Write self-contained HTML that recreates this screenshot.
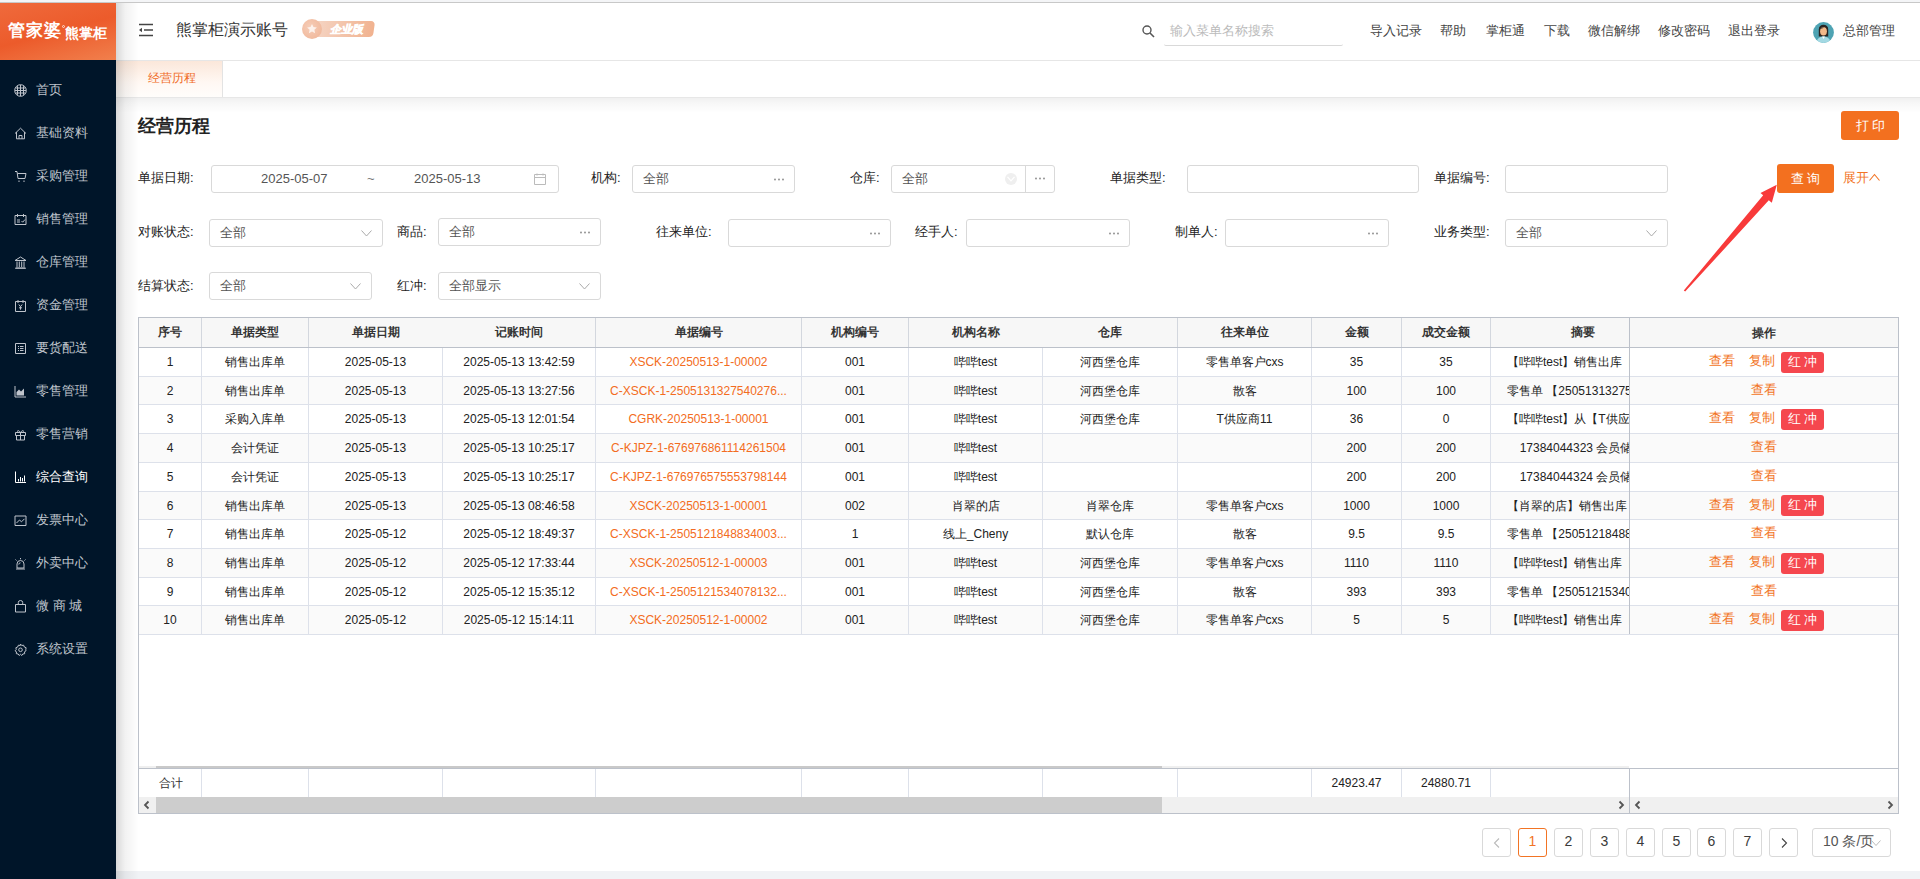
<!DOCTYPE html><html><head><meta charset="utf-8"><style>
*{box-sizing:border-box;margin:0;padding:0}
html,body{width:1920px;height:879px;overflow:hidden;background:#fff;font-family:"Liberation Sans",sans-serif;color:#333}
.a{position:absolute;white-space:nowrap}
#topstrip{left:0;top:0;width:1920px;height:3px;background:#f4f5f7;border-bottom:1px solid #c8c8c8}
#side{left:0;top:3px;width:116px;height:876px;background:#001529}
#logo{left:0;top:3px;width:116px;height:57px;background:linear-gradient(165deg,#ef6a3c 0%,#ec5b2b 50%,#f1804d 100%);overflow:hidden}
.mi{font-size:13px;color:#bfc4cc;line-height:16px}
.mi.on{color:#fff}
.ic{width:13px;height:13px}
#header{left:116px;top:3px;width:1804px;height:58px;background:#fff;border-bottom:1px solid #e6e6e6}
#tabs{left:116px;top:61px;width:1804px;height:36px;background:#fff}
#tabshadow{left:116px;top:97px;width:1804px;height:16px;background:linear-gradient(180deg,rgba(0,0,0,.13),rgba(0,0,0,.06) 1px,rgba(0,0,0,.03) 6px,rgba(0,0,0,0))}
#sideShadow{z-index:5;left:116px;top:3px;width:23px;height:876px;background:linear-gradient(90deg,rgba(0,0,0,.15),rgba(0,0,0,.05) 40%,rgba(0,0,0,0))}
#bottomstrip{left:116px;top:871px;width:1804px;height:8px;background:#f0f2f5}
.hl{font-size:13px;color:#444;line-height:16px;top:23px}
.lbl{font-size:13px;color:#222;line-height:16px}
.inp{border:1px solid #d9d9d9;border-radius:3px;background:#fff;height:28px;font-size:13px;color:#555}
.inp .v{position:absolute;left:10px;top:5px;line-height:16px}
.dots{position:absolute;right:8px;top:4px;font-size:12px;color:#666;line-height:12px;letter-spacing:-0.5px}
.chev{position:absolute;width:11px;height:7px}
.btn{background:#f3701f;color:#fff;border-radius:3px;font-size:13px;text-align:center}
.tb{position:absolute;left:138px;top:317px;width:1761px;height:497px;border:1px solid #bcc1ca;background:#fff;overflow:hidden}
.thx{position:absolute;top:0;height:30px;background:#f7f7f7;border-bottom:1px solid #bcc1ca;font-size:12px;font-weight:bold;color:#333;text-align:center;line-height:30px}
.td{position:absolute;height:29px;font-size:12px;color:#222;text-align:center;line-height:29px;overflow:hidden}
.vl{position:absolute;width:1px;background:#dde1ea}
.hr{position:absolute;height:1px;background:#dde1ea}
.lnk{color:#f36c21}
.pg{position:absolute;top:828px;width:29px;height:29px;border:1px solid #d9d9d9;border-radius:3px;font-size:14px;color:#3a3a3a;text-align:center;line-height:25px}
</style></head><body>
<div id="topstrip" class="a"></div>
<div id="side" class="a"></div>
<div id="logo" class="a"><div class="a" style="left:8px;top:18px;color:#fff;font-weight:bold;font-size:17px;line-height:20px;letter-spacing:1px">管家婆</div><div class="a" style="left:62px;top:22px;width:3px;height:3px;border:1px solid #fff;border-radius:50%;opacity:.7"></div><div class="a" style="left:65px;top:21px;color:#fff;font-weight:bold;font-size:14px;line-height:18px;letter-spacing:0px">熊掌柜</div></div>
<svg class="a ic" style="left:14px;top:84px" viewBox="0 0 13 13" fill="none" stroke="#bfc4cc" stroke-width="1"><circle cx="6.5" cy="6.5" r="5.8"/><path d="M1 6.5h11M6.5 1v11M3.5 2.2v8.6M9.5 2.2v8.6M1.5 4h10M1.5 9h10"/></svg>
<div class="a mi" style="left:36px;top:82px">首页</div>
<svg class="a ic" style="left:14px;top:127px" viewBox="0 0 13 13" fill="none" stroke="#bfc4cc" stroke-width="1"><path d="M1 6.5L6.5 1.2 12 6.5M2.5 5v6.8h8V5M5 11.8V8.5h3v3.3"/></svg>
<div class="a mi" style="left:36px;top:125px">基础资料</div>
<svg class="a ic" style="left:14px;top:170px" viewBox="0 0 13 13" fill="none" stroke="#bfc4cc" stroke-width="1"><path d="M1 1.5h2l1 7h7l1-5H3.5M5 10.5v1.5M10 10.5v1.5"/></svg>
<div class="a mi" style="left:36px;top:168px">采购管理</div>
<svg class="a ic" style="left:14px;top:213px" viewBox="0 0 13 13" fill="none" stroke="#bfc4cc" stroke-width="1"><path d="M1 2.5h11v9H1zM3.5 1v3M9.5 1v3M3 7h3M3 9h3M7.5 8l1.2 1.2L11 6.5"/></svg>
<div class="a mi" style="left:36px;top:211px">销售管理</div>
<svg class="a ic" style="left:14px;top:256px" viewBox="0 0 13 13" fill="none" stroke="#bfc4cc" stroke-width="1"><path d="M1 4.5L6.5 1 12 4.5zM2 12h9M3 5.5v5.5M5.3 5.5v5.5M7.7 5.5v5.5M10 5.5v5.5M1 12.2h11"/></svg>
<div class="a mi" style="left:36px;top:254px">仓库管理</div>
<svg class="a ic" style="left:14px;top:299px" viewBox="0 0 13 13" fill="none" stroke="#bfc4cc" stroke-width="1"><path d="M1.5 2.5h10v10h-10zM4 1v3M9 1v3M4.8 5.5l1.7 2.2 1.7-2.2M6.5 7.7v3M5 8.8h3"/></svg>
<div class="a mi" style="left:36px;top:297px">资金管理</div>
<svg class="a ic" style="left:14px;top:342px" viewBox="0 0 13 13" fill="none" stroke="#bfc4cc" stroke-width="1"><path d="M1.5 1.5h10v10h-10zM4 4.5h1M6 4.5h3.5M4 6.5h1M6 6.5h3.5M4 8.5h1M6 8.5h3.5"/></svg>
<div class="a mi" style="left:36px;top:340px">要货配送</div>
<svg class="a ic" style="left:14px;top:385px" viewBox="0 0 13 13" fill="none" stroke="#bfc4cc" stroke-width="1"><path d="M1 1v11h11"/><path d="M2.5 10.5V7l2.5-2.5 2 2 3-3v7z" fill="#bfc4cc" stroke="none"/></svg>
<div class="a mi" style="left:36px;top:383px">零售管理</div>
<svg class="a ic" style="left:14px;top:428px" viewBox="0 0 13 13" fill="none" stroke="#bfc4cc" stroke-width="1"><path d="M1.5 4.5h10v3h-10zM2.5 7.5h8v4.5h-8zM6.5 4.5v7.5M6.5 4.5C4 1 2.5 3 4.5 4.5M6.5 4.5C9 1 10.5 3 8.5 4.5"/></svg>
<div class="a mi" style="left:36px;top:426px">零售营销</div>
<svg class="a ic" style="left:14px;top:471px" viewBox="0 0 13 13" fill="none" stroke="#fff" stroke-width="1"><path d="M1.5 0.5v11h10.5M4.5 10.5V8M6.5 10.5V6M8.5 10.5V7M10.5 10.5V4.5"/></svg>
<div class="a mi on" style="left:36px;top:469px">综合查询</div>
<svg class="a ic" style="left:14px;top:514px" viewBox="0 0 13 13" fill="none" stroke="#bfc4cc" stroke-width="1"><path d="M1 2h11v9.5H1zM2.5 9l3-3 2 1.8 3-3"/></svg>
<div class="a mi" style="left:36px;top:512px">发票中心</div>
<svg class="a ic" style="left:14px;top:557px" viewBox="0 0 13 13" fill="none" stroke="#bfc4cc" stroke-width="1"><path d="M3 11V7a3.5 3.5 0 0 1 7 0v4zM2 12h9M6.5 1v1.3M1.5 2.5l1 1M11.5 2.5l-1 1M4.8 7.5a1.7 1.7 0 0 1 1.7-1.7"/></svg>
<div class="a mi" style="left:36px;top:555px">外卖中心</div>
<svg class="a ic" style="left:14px;top:600px" viewBox="0 0 13 13" fill="none" stroke="#bfc4cc" stroke-width="1"><path d="M1.5 4.5h10v7.5h-10zM4.3 4.5V2.5a2.2 2 0 0 1 4.4 0v2"/></svg>
<div class="a mi" style="left:36px;top:598px">微 商 城</div>
<svg class="a ic" style="left:14px;top:643px" viewBox="0 0 13 13" fill="none" stroke="#bfc4cc" stroke-width="1"><path d="M6.5 1l1.2 1.5 1.9-.3.7 1.8 1.8.7-.3 1.9L12 7.8l-1.5 1 .2 1.9-1.9.3-1 1.5-1.3-1.2-1.3 1.2-1-1.5-1.9-.3.2-1.9L1 7.8l1.2-1.2-.3-1.9 1.8-.7.7-1.8 1.9.3z"/><circle cx="6.5" cy="6.8" r="1.8"/></svg>
<div class="a mi" style="left:36px;top:641px">系统设置</div>
<div id="header" class="a"></div>
<div id="tabs" class="a"></div>
<div id="tabshadow" class="a"></div>
<div id="sideShadow" class="a"></div>
<div id="bottomstrip" class="a"></div>
<svg class="a" style="left:139px;top:23px" width="15" height="14" viewBox="0 0 15 14"><path d="M0 1.5h14M5 7h9M0 12.5h14" stroke="#444" stroke-width="1.6"/><path d="M0 7l3-2.3v4.6z" fill="#444"/></svg>
<div class="a" style="left:176px;top:20px;font-size:16px;line-height:19px;color:#333">熊掌柜演示账号</div>
<div class="a" style="left:312px;top:21px;width:62px;height:16px;border-radius:2px 4px 4px 2px;background:linear-gradient(90deg,#f5d6c6,#f1b28f);transform:skewX(-8deg)"></div>
<div class="a" style="left:302px;top:19px;width:20px;height:20px;border-radius:50%;background:radial-gradient(circle at 40% 40%,#f6cdb8,#efb394)"></div>
<svg class="a" style="left:306px;top:23px" width="12" height="12" viewBox="0 0 12 12"><path d="M6 1l1.5 3.1 3.4.4-2.5 2.3.7 3.4L6 8.5 2.9 10.2l.7-3.4L1.1 4.5l3.4-.4z" fill="#fff" opacity=".75"/></svg>
<div class="a" style="left:330px;top:22px;font-size:11px;line-height:14px;color:#fff;font-weight:bold;font-style:italic;-webkit-text-stroke:0.5px #fff">企业版</div>
<svg class="a" style="left:1142px;top:25px" width="13" height="13" viewBox="0 0 13 13"><circle cx="5" cy="5" r="4" fill="none" stroke="#555" stroke-width="1.4"/><path d="M8 8l4 4" stroke="#555" stroke-width="1.6"/></svg>
<div class="a" style="left:1164px;top:44px;width:179px;height:2px;border-bottom:1px solid #d9d9d9;border-radius:0 0 4px 4px"></div>
<div class="a" style="left:1170px;top:23px;font-size:13px;line-height:16px;color:#bbb">输入菜单名称搜索</div>
<div class="a hl" style="left:1370px">导入记录</div>
<div class="a hl" style="left:1440px">帮助</div>
<div class="a hl" style="left:1486px">掌柜通</div>
<div class="a hl" style="left:1544px">下载</div>
<div class="a hl" style="left:1588px">微信解绑</div>
<div class="a hl" style="left:1658px">修改密码</div>
<div class="a hl" style="left:1728px">退出登录</div>
<svg class="a" style="left:1813px;top:22px" width="21" height="21" viewBox="0 0 21 21"><defs><clipPath id="cc"><circle cx="10.5" cy="10.5" r="10.4"/></clipPath></defs><circle cx="10.5" cy="10.5" r="10.4" fill="#4ea3b3"/><g clip-path="url(#cc)"><path d="M5.8 14.5V7.5C5.8 4.3 7.8 2.8 10.5 2.8S15.2 4.3 15.2 7.5V14.5z" fill="#2b2522"/><ellipse cx="10.5" cy="9.3" rx="3.4" ry="4.3" fill="#f2b888"/><path d="M7 6.5C8.5 6.8 11 6 12.5 4.8L14.2 7.2V5.5H6.8z" fill="#2b2522"/><path d="M3.5 21.5C3.5 16.5 6.5 14.8 10.5 14.5C14.5 14.8 17.5 16.5 17.5 21.5z" fill="#a3d9e3"/><path d="M9 14.5L10.5 17L12 14.5z" fill="#fff"/></g></svg>
<div class="a hl" style="left:1843px">总部管理</div>
<div class="a" style="left:116px;top:61px;width:107px;height:36px;background:linear-gradient(180deg,#fbe7da,#fff8f3 60%,#fffdfb);border-right:1px solid #e3e3e3"></div>
<div class="a" style="left:148px;top:70px;font-size:11.5px;line-height:16px;color:#f06a24">经营历程</div>
<div class="a" style="left:138px;top:115px;font-size:18px;line-height:22px;font-weight:bold;color:#222">经营历程</div>
<div class="a btn" style="left:1841px;top:111px;width:58px;height:29px;line-height:29px;letter-spacing:3px;padding-left:3px">打印</div>
<div class="a lbl" style="left:138px;top:170px">单据日期:</div>
<div class="a inp" style="left:211px;top:165px;width:348px"><div class="v" style="left:49px">2025-05-07</div><div class="v" style="left:155px;color:#777">~</div><div class="v" style="left:202px">2025-05-13</div><svg class="a" style="left:322px;top:7px" width="12" height="12" viewBox="0 0 12 12"><path d="M.5 1.5h11v10H.5zM.5 4.5h11M3 .5v2M9 .5v2" fill="none" stroke="#bbb" stroke-width="1"/></svg></div>
<div class="a lbl" style="left:591px;top:170px">机构:</div>
<div class="a inp" style="left:632px;top:165px;width:163px"><div class="v">全部</div><svg class="a" style="right:10px;top:12px" width="10" height="3" viewBox="0 0 10 3"><circle cx="1" cy="1.5" r="0.9" fill="#888"/><circle cx="5" cy="1.5" r="0.9" fill="#888"/><circle cx="9" cy="1.5" r="0.9" fill="#888"/></svg></div>
<div class="a lbl" style="left:850px;top:170px">仓库:</div>
<div class="a inp" style="left:891px;top:165px;width:164px"><div class="v">全部</div><div class="a" style="left:113px;top:7px;width:12px;height:12px;border-radius:50%;background:#efefef"></div><svg class="a" style="left:115px;top:10px" width="8" height="6" viewBox="0 0 8 6"><path d="M.5 .8l3.5 4 3.5-4" fill="none" stroke="#fff" stroke-width="1.2"/></svg><div class="a" style="left:133px;top:-1px;width:1px;height:28px;background:#d9d9d9"></div><svg class="a" style="right:9px;top:11px" width="10" height="3" viewBox="0 0 10 3"><circle cx="1" cy="1.5" r="0.9" fill="#888"/><circle cx="5" cy="1.5" r="0.9" fill="#888"/><circle cx="9" cy="1.5" r="0.9" fill="#888"/></svg></div>
<div class="a lbl" style="left:1110px;top:170px">单据类型:</div>
<div class="a inp" style="left:1187px;top:165px;width:232px"></div>
<div class="a lbl" style="left:1434px;top:170px">单据编号:</div>
<div class="a inp" style="left:1505px;top:165px;width:163px"></div>
<div class="a btn" style="left:1777px;top:164px;width:57px;height:29px;line-height:29px;letter-spacing:3px;padding-left:3px">查询</div>
<div class="a" style="left:1843px;top:170px;font-size:13px;line-height:16px;color:#f27424">展开<svg width="11" height="8" viewBox="0 0 11 8" style="vertical-align:1px"><path d="M.5 7.5L5.5 1.5l5 6" fill="none" stroke="#f27424" stroke-width="1.1"/></svg></div>
<div class="a lbl" style="left:138px;top:224px">对账状态:</div>
<div class="a inp" style="left:209px;top:219px;width:174px"><div class="v">全部</div><svg class="chev" style="right:10px;top:10px" viewBox="0 0 11 7"><path d="M.5 .5l5 5.5 5-5.5" fill="none" stroke="#aaa" stroke-width="1"/></svg></div>
<div class="a lbl" style="left:397px;top:224px">商品:</div>
<div class="a inp" style="left:438px;top:218px;width:163px"><div class="v">全部</div><svg class="a" style="right:10px;top:12px" width="10" height="3" viewBox="0 0 10 3"><circle cx="1" cy="1.5" r="0.9" fill="#888"/><circle cx="5" cy="1.5" r="0.9" fill="#888"/><circle cx="9" cy="1.5" r="0.9" fill="#888"/></svg></div>
<div class="a lbl" style="left:656px;top:224px">往来单位:</div>
<div class="a inp" style="left:728px;top:219px;width:163px"><svg class="a" style="right:10px;top:12px" width="10" height="3" viewBox="0 0 10 3"><circle cx="1" cy="1.5" r="0.9" fill="#888"/><circle cx="5" cy="1.5" r="0.9" fill="#888"/><circle cx="9" cy="1.5" r="0.9" fill="#888"/></svg></div>
<div class="a lbl" style="left:915px;top:224px">经手人:</div>
<div class="a inp" style="left:966px;top:219px;width:164px"><svg class="a" style="right:10px;top:12px" width="10" height="3" viewBox="0 0 10 3"><circle cx="1" cy="1.5" r="0.9" fill="#888"/><circle cx="5" cy="1.5" r="0.9" fill="#888"/><circle cx="9" cy="1.5" r="0.9" fill="#888"/></svg></div>
<div class="a lbl" style="left:1175px;top:224px">制单人:</div>
<div class="a inp" style="left:1225px;top:219px;width:164px"><svg class="a" style="right:10px;top:12px" width="10" height="3" viewBox="0 0 10 3"><circle cx="1" cy="1.5" r="0.9" fill="#888"/><circle cx="5" cy="1.5" r="0.9" fill="#888"/><circle cx="9" cy="1.5" r="0.9" fill="#888"/></svg></div>
<div class="a lbl" style="left:1434px;top:224px">业务类型:</div>
<div class="a inp" style="left:1505px;top:219px;width:163px"><div class="v">全部</div><svg class="chev" style="right:10px;top:10px" viewBox="0 0 11 7"><path d="M.5 .5l5 5.5 5-5.5" fill="none" stroke="#aaa" stroke-width="1"/></svg></div>
<div class="a lbl" style="left:138px;top:278px">结算状态:</div>
<div class="a inp" style="left:209px;top:272px;width:163px"><div class="v">全部</div><svg class="chev" style="right:10px;top:10px" viewBox="0 0 11 7"><path d="M.5 .5l5 5.5 5-5.5" fill="none" stroke="#aaa" stroke-width="1"/></svg></div>
<div class="a lbl" style="left:397px;top:278px">红冲:</div>
<div class="a inp" style="left:438px;top:272px;width:163px"><div class="v">全部显示</div><svg class="chev" style="right:10px;top:10px" viewBox="0 0 11 7"><path d="M.5 .5l5 5.5 5-5.5" fill="none" stroke="#aaa" stroke-width="1"/></svg></div>
<svg class="a" style="left:0;top:0" width="1920" height="879"><path d="M1683.8 290.6 L1763.2 195.3 L1760.5 192.9 L1776.8 184.8 L1771.8 202.8 L1768.8 200.3 L1685.2 291.6 Z" fill="#f83a3a"/></svg>
<div class="tb">
<div class="a" style="left:0.00px;top:30.00px;width:1759.00px;height:28.70px;background:#fff"></div>
<div class="a" style="left:0.00px;top:58.70px;width:1759.00px;height:28.70px;background:#fafafa"></div>
<div class="a" style="left:0.00px;top:87.40px;width:1759.00px;height:28.70px;background:#fff"></div>
<div class="a" style="left:0.00px;top:116.10px;width:1759.00px;height:28.70px;background:#fafafa"></div>
<div class="a" style="left:0.00px;top:144.80px;width:1759.00px;height:28.70px;background:#fff"></div>
<div class="a" style="left:0.00px;top:173.50px;width:1759.00px;height:28.70px;background:#fafafa"></div>
<div class="a" style="left:0.00px;top:202.20px;width:1759.00px;height:28.70px;background:#fff"></div>
<div class="a" style="left:0.00px;top:230.90px;width:1759.00px;height:28.70px;background:#fafafa"></div>
<div class="a" style="left:0.00px;top:259.60px;width:1759.00px;height:28.70px;background:#fff"></div>
<div class="a" style="left:0.00px;top:288.30px;width:1759.00px;height:28.70px;background:#fafafa"></div>
<div class="a" style="left:0.00px;top:0.00px;width:1759.00px;height:29.00px;background:#f7f7f7"></div>
<div class="a" style="left:0.00px;top:29.00px;width:1759.00px;height:1.00px;background:#bcc1ca"></div>
<div class="a" style="left:0.00px;top:0.00px;width:62.00px;height:29.00px;line-height:29px;text-align:center;font-size:11.5px;font-weight:bold;color:#333">序号</div>
<div class="a" style="left:63.00px;top:0.00px;width:106.00px;height:29.00px;line-height:29px;text-align:center;font-size:11.5px;font-weight:bold;color:#333">单据类型</div>
<div class="a" style="left:170.00px;top:0.00px;width:133.00px;height:29.00px;line-height:29px;text-align:center;font-size:11.5px;font-weight:bold;color:#333">单据日期</div>
<div class="a" style="left:304.00px;top:0.00px;width:152.00px;height:29.00px;line-height:29px;text-align:center;font-size:11.5px;font-weight:bold;color:#333">记账时间</div>
<div class="a" style="left:457.00px;top:0.00px;width:205.00px;height:29.00px;line-height:29px;text-align:center;font-size:11.5px;font-weight:bold;color:#333">单据编号</div>
<div class="a" style="left:663.00px;top:0.00px;width:106.00px;height:29.00px;line-height:29px;text-align:center;font-size:11.5px;font-weight:bold;color:#333">机构编号</div>
<div class="a" style="left:770.00px;top:0.00px;width:133.00px;height:29.00px;line-height:29px;text-align:center;font-size:11.5px;font-weight:bold;color:#333">机构名称</div>
<div class="a" style="left:904.00px;top:0.00px;width:134.00px;height:29.00px;line-height:29px;text-align:center;font-size:11.5px;font-weight:bold;color:#333">仓库</div>
<div class="a" style="left:1039.00px;top:0.00px;width:133.00px;height:29.00px;line-height:29px;text-align:center;font-size:11.5px;font-weight:bold;color:#333">往来单位</div>
<div class="a" style="left:1173.00px;top:0.00px;width:89.00px;height:29.00px;line-height:29px;text-align:center;font-size:11.5px;font-weight:bold;color:#333">金额</div>
<div class="a" style="left:1263.00px;top:0.00px;width:88.00px;height:29.00px;line-height:29px;text-align:center;font-size:11.5px;font-weight:bold;color:#333">成交金额</div>
<div class="a" style="left:1352.00px;top:0.00px;width:183.00px;height:29.00px;line-height:29px;text-align:center;font-size:11.5px;font-weight:bold;color:#333">摘要</div>
<div class="a" style="left:62.00px;top:0.00px;width:1.00px;height:29.00px;background:#d3d7de"></div>
<div class="a" style="left:169.00px;top:0.00px;width:1.00px;height:29.00px;background:#d3d7de"></div>
<div class="a" style="left:456.00px;top:0.00px;width:1.00px;height:29.00px;background:#d3d7de"></div>
<div class="a" style="left:662.00px;top:0.00px;width:1.00px;height:29.00px;background:#d3d7de"></div>
<div class="a" style="left:769.00px;top:0.00px;width:1.00px;height:29.00px;background:#d3d7de"></div>
<div class="a" style="left:1038.00px;top:0.00px;width:1.00px;height:29.00px;background:#d3d7de"></div>
<div class="a" style="left:1172.00px;top:0.00px;width:1.00px;height:29.00px;background:#d3d7de"></div>
<div class="a" style="left:1262.00px;top:0.00px;width:1.00px;height:29.00px;background:#d3d7de"></div>
<div class="a" style="left:1351.00px;top:0.00px;width:1.00px;height:29.00px;background:#d3d7de"></div>
<div class="a" style="left:1490.00px;top:0.00px;width:1.00px;height:29.00px;background:#d3d7de"></div>
<div class="td" style="left:0.00px;top:30.00px;width:62.00px;height:27.70px;line-height:28px">1</div>
<div class="td" style="left:63.00px;top:30.00px;width:106.00px;height:27.70px;line-height:28px">销售出库单</div>
<div class="td" style="left:170.00px;top:30.00px;width:133.00px;height:27.70px;line-height:28px">2025-05-13</div>
<div class="td" style="left:304.00px;top:30.00px;width:152.00px;height:27.70px;line-height:28px">2025-05-13 13:42:59</div>
<div class="td" style="left:457.00px;top:30.00px;width:205.00px;height:27.70px;line-height:28px"><span class="lnk">XSCK-20250513-1-00002</span></div>
<div class="td" style="left:663.00px;top:30.00px;width:106.00px;height:27.70px;line-height:28px">001</div>
<div class="td" style="left:770.00px;top:30.00px;width:133.00px;height:27.70px;line-height:28px">哔哔test</div>
<div class="td" style="left:904.00px;top:30.00px;width:134.00px;height:27.70px;line-height:28px">河西堡仓库</div>
<div class="td" style="left:1039.00px;top:30.00px;width:133.00px;height:27.70px;line-height:28px">零售单客户cxs</div>
<div class="td" style="left:1173.00px;top:30.00px;width:89.00px;height:27.70px;line-height:28px">35</div>
<div class="td" style="left:1263.00px;top:30.00px;width:88.00px;height:27.70px;line-height:28px">35</div>
<div class="td" style="left:1368.00px;top:30.00px;width:150.00px;height:27.70px;line-height:28px;white-space:nowrap">【哔哔test】销售出库【XSCK-20250513-1-00002】</div>
<div class="td" style="left:0.00px;top:58.70px;width:62.00px;height:27.70px;line-height:28px">2</div>
<div class="td" style="left:63.00px;top:58.70px;width:106.00px;height:27.70px;line-height:28px">销售出库单</div>
<div class="td" style="left:170.00px;top:58.70px;width:133.00px;height:27.70px;line-height:28px">2025-05-13</div>
<div class="td" style="left:304.00px;top:58.70px;width:152.00px;height:27.70px;line-height:28px">2025-05-13 13:27:56</div>
<div class="td" style="left:457.00px;top:58.70px;width:205.00px;height:27.70px;line-height:28px"><span class="lnk">C-XSCK-1-2505131327540276...</span></div>
<div class="td" style="left:663.00px;top:58.70px;width:106.00px;height:27.70px;line-height:28px">001</div>
<div class="td" style="left:770.00px;top:58.70px;width:133.00px;height:27.70px;line-height:28px">哔哔test</div>
<div class="td" style="left:904.00px;top:58.70px;width:134.00px;height:27.70px;line-height:28px">河西堡仓库</div>
<div class="td" style="left:1039.00px;top:58.70px;width:133.00px;height:27.70px;line-height:28px">散客</div>
<div class="td" style="left:1173.00px;top:58.70px;width:89.00px;height:27.70px;line-height:28px">100</div>
<div class="td" style="left:1263.00px;top:58.70px;width:88.00px;height:27.70px;line-height:28px">100</div>
<div class="td" style="left:1368.00px;top:58.70px;width:150.00px;height:27.70px;line-height:28px;white-space:nowrap">零售单 【2505131327540276】</div>
<div class="td" style="left:0.00px;top:87.40px;width:62.00px;height:27.70px;line-height:28px">3</div>
<div class="td" style="left:63.00px;top:87.40px;width:106.00px;height:27.70px;line-height:28px">采购入库单</div>
<div class="td" style="left:170.00px;top:87.40px;width:133.00px;height:27.70px;line-height:28px">2025-05-13</div>
<div class="td" style="left:304.00px;top:87.40px;width:152.00px;height:27.70px;line-height:28px">2025-05-13 12:01:54</div>
<div class="td" style="left:457.00px;top:87.40px;width:205.00px;height:27.70px;line-height:28px"><span class="lnk">CGRK-20250513-1-00001</span></div>
<div class="td" style="left:663.00px;top:87.40px;width:106.00px;height:27.70px;line-height:28px">001</div>
<div class="td" style="left:770.00px;top:87.40px;width:133.00px;height:27.70px;line-height:28px">哔哔test</div>
<div class="td" style="left:904.00px;top:87.40px;width:134.00px;height:27.70px;line-height:28px">河西堡仓库</div>
<div class="td" style="left:1039.00px;top:87.40px;width:133.00px;height:27.70px;line-height:28px">T供应商11</div>
<div class="td" style="left:1173.00px;top:87.40px;width:89.00px;height:27.70px;line-height:28px">36</div>
<div class="td" style="left:1263.00px;top:87.40px;width:88.00px;height:27.70px;line-height:28px">0</div>
<div class="td" style="left:1368.00px;top:87.40px;width:150.00px;height:27.70px;line-height:28px;white-space:nowrap">【哔哔test】从【T供应商11】采购入库</div>
<div class="td" style="left:0.00px;top:116.10px;width:62.00px;height:27.70px;line-height:28px">4</div>
<div class="td" style="left:63.00px;top:116.10px;width:106.00px;height:27.70px;line-height:28px">会计凭证</div>
<div class="td" style="left:170.00px;top:116.10px;width:133.00px;height:27.70px;line-height:28px">2025-05-13</div>
<div class="td" style="left:304.00px;top:116.10px;width:152.00px;height:27.70px;line-height:28px">2025-05-13 10:25:17</div>
<div class="td" style="left:457.00px;top:116.10px;width:205.00px;height:27.70px;line-height:28px"><span class="lnk">C-KJPZ-1-676976861114261504</span></div>
<div class="td" style="left:663.00px;top:116.10px;width:106.00px;height:27.70px;line-height:28px">001</div>
<div class="td" style="left:770.00px;top:116.10px;width:133.00px;height:27.70px;line-height:28px">哔哔test</div>
<div class="td" style="left:1173.00px;top:116.10px;width:89.00px;height:27.70px;line-height:28px">200</div>
<div class="td" style="left:1263.00px;top:116.10px;width:88.00px;height:27.70px;line-height:28px">200</div>
<div class="td" style="left:1368.00px;top:116.10px;width:150.00px;height:27.70px;line-height:28px;white-space:nowrap">17384044323 会员储值</div>
<div class="td" style="left:0.00px;top:144.80px;width:62.00px;height:27.70px;line-height:28px">5</div>
<div class="td" style="left:63.00px;top:144.80px;width:106.00px;height:27.70px;line-height:28px">会计凭证</div>
<div class="td" style="left:170.00px;top:144.80px;width:133.00px;height:27.70px;line-height:28px">2025-05-13</div>
<div class="td" style="left:304.00px;top:144.80px;width:152.00px;height:27.70px;line-height:28px">2025-05-13 10:25:17</div>
<div class="td" style="left:457.00px;top:144.80px;width:205.00px;height:27.70px;line-height:28px"><span class="lnk">C-KJPZ-1-676976575553798144</span></div>
<div class="td" style="left:663.00px;top:144.80px;width:106.00px;height:27.70px;line-height:28px">001</div>
<div class="td" style="left:770.00px;top:144.80px;width:133.00px;height:27.70px;line-height:28px">哔哔test</div>
<div class="td" style="left:1173.00px;top:144.80px;width:89.00px;height:27.70px;line-height:28px">200</div>
<div class="td" style="left:1263.00px;top:144.80px;width:88.00px;height:27.70px;line-height:28px">200</div>
<div class="td" style="left:1368.00px;top:144.80px;width:150.00px;height:27.70px;line-height:28px;white-space:nowrap">17384044324 会员储值</div>
<div class="td" style="left:0.00px;top:173.50px;width:62.00px;height:27.70px;line-height:28px">6</div>
<div class="td" style="left:63.00px;top:173.50px;width:106.00px;height:27.70px;line-height:28px">销售出库单</div>
<div class="td" style="left:170.00px;top:173.50px;width:133.00px;height:27.70px;line-height:28px">2025-05-13</div>
<div class="td" style="left:304.00px;top:173.50px;width:152.00px;height:27.70px;line-height:28px">2025-05-13 08:46:58</div>
<div class="td" style="left:457.00px;top:173.50px;width:205.00px;height:27.70px;line-height:28px"><span class="lnk">XSCK-20250513-1-00001</span></div>
<div class="td" style="left:663.00px;top:173.50px;width:106.00px;height:27.70px;line-height:28px">002</div>
<div class="td" style="left:770.00px;top:173.50px;width:133.00px;height:27.70px;line-height:28px">肖翠的店</div>
<div class="td" style="left:904.00px;top:173.50px;width:134.00px;height:27.70px;line-height:28px">肖翠仓库</div>
<div class="td" style="left:1039.00px;top:173.50px;width:133.00px;height:27.70px;line-height:28px">零售单客户cxs</div>
<div class="td" style="left:1173.00px;top:173.50px;width:89.00px;height:27.70px;line-height:28px">1000</div>
<div class="td" style="left:1263.00px;top:173.50px;width:88.00px;height:27.70px;line-height:28px">1000</div>
<div class="td" style="left:1368.00px;top:173.50px;width:150.00px;height:27.70px;line-height:28px;white-space:nowrap">【肖翠的店】销售出库【XSCK-20250513-1-00001】</div>
<div class="td" style="left:0.00px;top:202.20px;width:62.00px;height:27.70px;line-height:28px">7</div>
<div class="td" style="left:63.00px;top:202.20px;width:106.00px;height:27.70px;line-height:28px">销售出库单</div>
<div class="td" style="left:170.00px;top:202.20px;width:133.00px;height:27.70px;line-height:28px">2025-05-12</div>
<div class="td" style="left:304.00px;top:202.20px;width:152.00px;height:27.70px;line-height:28px">2025-05-12 18:49:37</div>
<div class="td" style="left:457.00px;top:202.20px;width:205.00px;height:27.70px;line-height:28px"><span class="lnk">C-XSCK-1-2505121848834003...</span></div>
<div class="td" style="left:663.00px;top:202.20px;width:106.00px;height:27.70px;line-height:28px">1</div>
<div class="td" style="left:770.00px;top:202.20px;width:133.00px;height:27.70px;line-height:28px">线上_Cheny</div>
<div class="td" style="left:904.00px;top:202.20px;width:134.00px;height:27.70px;line-height:28px">默认仓库</div>
<div class="td" style="left:1039.00px;top:202.20px;width:133.00px;height:27.70px;line-height:28px">散客</div>
<div class="td" style="left:1173.00px;top:202.20px;width:89.00px;height:27.70px;line-height:28px">9.5</div>
<div class="td" style="left:1263.00px;top:202.20px;width:88.00px;height:27.70px;line-height:28px">9.5</div>
<div class="td" style="left:1368.00px;top:202.20px;width:150.00px;height:27.70px;line-height:28px;white-space:nowrap">零售单 【2505121848834003】</div>
<div class="td" style="left:0.00px;top:230.90px;width:62.00px;height:27.70px;line-height:28px">8</div>
<div class="td" style="left:63.00px;top:230.90px;width:106.00px;height:27.70px;line-height:28px">销售出库单</div>
<div class="td" style="left:170.00px;top:230.90px;width:133.00px;height:27.70px;line-height:28px">2025-05-12</div>
<div class="td" style="left:304.00px;top:230.90px;width:152.00px;height:27.70px;line-height:28px">2025-05-12 17:33:44</div>
<div class="td" style="left:457.00px;top:230.90px;width:205.00px;height:27.70px;line-height:28px"><span class="lnk">XSCK-20250512-1-00003</span></div>
<div class="td" style="left:663.00px;top:230.90px;width:106.00px;height:27.70px;line-height:28px">001</div>
<div class="td" style="left:770.00px;top:230.90px;width:133.00px;height:27.70px;line-height:28px">哔哔test</div>
<div class="td" style="left:904.00px;top:230.90px;width:134.00px;height:27.70px;line-height:28px">河西堡仓库</div>
<div class="td" style="left:1039.00px;top:230.90px;width:133.00px;height:27.70px;line-height:28px">零售单客户cxs</div>
<div class="td" style="left:1173.00px;top:230.90px;width:89.00px;height:27.70px;line-height:28px">1110</div>
<div class="td" style="left:1263.00px;top:230.90px;width:88.00px;height:27.70px;line-height:28px">1110</div>
<div class="td" style="left:1368.00px;top:230.90px;width:150.00px;height:27.70px;line-height:28px;white-space:nowrap">【哔哔test】销售出库【XSCK-20250512-1-00003】</div>
<div class="td" style="left:0.00px;top:259.60px;width:62.00px;height:27.70px;line-height:28px">9</div>
<div class="td" style="left:63.00px;top:259.60px;width:106.00px;height:27.70px;line-height:28px">销售出库单</div>
<div class="td" style="left:170.00px;top:259.60px;width:133.00px;height:27.70px;line-height:28px">2025-05-12</div>
<div class="td" style="left:304.00px;top:259.60px;width:152.00px;height:27.70px;line-height:28px">2025-05-12 15:35:12</div>
<div class="td" style="left:457.00px;top:259.60px;width:205.00px;height:27.70px;line-height:28px"><span class="lnk">C-XSCK-1-2505121534078132...</span></div>
<div class="td" style="left:663.00px;top:259.60px;width:106.00px;height:27.70px;line-height:28px">001</div>
<div class="td" style="left:770.00px;top:259.60px;width:133.00px;height:27.70px;line-height:28px">哔哔test</div>
<div class="td" style="left:904.00px;top:259.60px;width:134.00px;height:27.70px;line-height:28px">河西堡仓库</div>
<div class="td" style="left:1039.00px;top:259.60px;width:133.00px;height:27.70px;line-height:28px">散客</div>
<div class="td" style="left:1173.00px;top:259.60px;width:89.00px;height:27.70px;line-height:28px">393</div>
<div class="td" style="left:1263.00px;top:259.60px;width:88.00px;height:27.70px;line-height:28px">393</div>
<div class="td" style="left:1368.00px;top:259.60px;width:150.00px;height:27.70px;line-height:28px;white-space:nowrap">零售单 【2505121534078132】</div>
<div class="td" style="left:0.00px;top:288.30px;width:62.00px;height:27.70px;line-height:28px">10</div>
<div class="td" style="left:63.00px;top:288.30px;width:106.00px;height:27.70px;line-height:28px">销售出库单</div>
<div class="td" style="left:170.00px;top:288.30px;width:133.00px;height:27.70px;line-height:28px">2025-05-12</div>
<div class="td" style="left:304.00px;top:288.30px;width:152.00px;height:27.70px;line-height:28px">2025-05-12 15:14:11</div>
<div class="td" style="left:457.00px;top:288.30px;width:205.00px;height:27.70px;line-height:28px"><span class="lnk">XSCK-20250512-1-00002</span></div>
<div class="td" style="left:663.00px;top:288.30px;width:106.00px;height:27.70px;line-height:28px">001</div>
<div class="td" style="left:770.00px;top:288.30px;width:133.00px;height:27.70px;line-height:28px">哔哔test</div>
<div class="td" style="left:904.00px;top:288.30px;width:134.00px;height:27.70px;line-height:28px">河西堡仓库</div>
<div class="td" style="left:1039.00px;top:288.30px;width:133.00px;height:27.70px;line-height:28px">零售单客户cxs</div>
<div class="td" style="left:1173.00px;top:288.30px;width:89.00px;height:27.70px;line-height:28px">5</div>
<div class="td" style="left:1263.00px;top:288.30px;width:88.00px;height:27.70px;line-height:28px">5</div>
<div class="td" style="left:1368.00px;top:288.30px;width:150.00px;height:27.70px;line-height:28px;white-space:nowrap">【哔哔test】销售出库【XSCK-20250512-1-00002】</div>
<div class="a" style="left:0.00px;top:57.70px;width:1759.00px;height:1.00px;background:#dde1ea"></div>
<div class="a" style="left:0.00px;top:86.40px;width:1759.00px;height:1.00px;background:#dde1ea"></div>
<div class="a" style="left:0.00px;top:115.10px;width:1759.00px;height:1.00px;background:#dde1ea"></div>
<div class="a" style="left:0.00px;top:143.80px;width:1759.00px;height:1.00px;background:#dde1ea"></div>
<div class="a" style="left:0.00px;top:172.50px;width:1759.00px;height:1.00px;background:#dde1ea"></div>
<div class="a" style="left:0.00px;top:201.20px;width:1759.00px;height:1.00px;background:#dde1ea"></div>
<div class="a" style="left:0.00px;top:229.90px;width:1759.00px;height:1.00px;background:#dde1ea"></div>
<div class="a" style="left:0.00px;top:258.60px;width:1759.00px;height:1.00px;background:#dde1ea"></div>
<div class="a" style="left:0.00px;top:287.30px;width:1759.00px;height:1.00px;background:#dde1ea"></div>
<div class="a" style="left:0.00px;top:316.00px;width:1759.00px;height:1.00px;background:#dde1ea"></div>
<div class="a" style="left:62.00px;top:30.00px;width:1.00px;height:286.00px;background:#dde1ea"></div>
<div class="a" style="left:169.00px;top:30.00px;width:1.00px;height:286.00px;background:#dde1ea"></div>
<div class="a" style="left:303.00px;top:30.00px;width:1.00px;height:286.00px;background:#dde1ea"></div>
<div class="a" style="left:456.00px;top:30.00px;width:1.00px;height:286.00px;background:#dde1ea"></div>
<div class="a" style="left:662.00px;top:30.00px;width:1.00px;height:286.00px;background:#dde1ea"></div>
<div class="a" style="left:769.00px;top:30.00px;width:1.00px;height:286.00px;background:#dde1ea"></div>
<div class="a" style="left:903.00px;top:30.00px;width:1.00px;height:286.00px;background:#dde1ea"></div>
<div class="a" style="left:1038.00px;top:30.00px;width:1.00px;height:286.00px;background:#dde1ea"></div>
<div class="a" style="left:1172.00px;top:30.00px;width:1.00px;height:286.00px;background:#dde1ea"></div>
<div class="a" style="left:1262.00px;top:30.00px;width:1.00px;height:286.00px;background:#dde1ea"></div>
<div class="a" style="left:1351.00px;top:30.00px;width:1.00px;height:286.00px;background:#dde1ea"></div>
<div class="a" style="left:1491.00px;top:0.00px;width:268.00px;height:29.00px;background:#f7f7f7;line-height:31px;text-align:center;font-size:11.5px;font-weight:bold;color:#333">操作</div>
<div class="a" style="left:1490.00px;top:0.00px;width:1.00px;height:316.00px;background:#bcc1ca"></div>
<div class="a" style="left:1491.00px;top:30.00px;width:268.00px;height:27.70px;background:#fff"></div>
<div class="a" style="left:1570.00px;top:35.00px;width:28.00px;height:16.00px;font-size:13px;line-height:16px;color:#f27424">查看</div>
<div class="a" style="left:1610.00px;top:35.00px;width:28.00px;height:16.00px;font-size:13px;line-height:16px;color:#f27424">复制</div>
<div class="a" style="left:1642.00px;top:33.70px;width:43.00px;height:21.00px;border-radius:3px;background:#f5474e;color:#fff;font-size:13px;line-height:19px;text-align:center;letter-spacing:3px;padding-left:3px">红冲</div>
<div class="a" style="left:1491.00px;top:58.70px;width:268.00px;height:27.70px;background:#fafafa"></div>
<div class="a" style="left:1612.00px;top:63.70px;width:28.00px;height:16.00px;font-size:13px;line-height:16px;color:#f27424">查看</div>
<div class="a" style="left:1491.00px;top:87.40px;width:268.00px;height:27.70px;background:#fff"></div>
<div class="a" style="left:1570.00px;top:92.40px;width:28.00px;height:16.00px;font-size:13px;line-height:16px;color:#f27424">查看</div>
<div class="a" style="left:1610.00px;top:92.40px;width:28.00px;height:16.00px;font-size:13px;line-height:16px;color:#f27424">复制</div>
<div class="a" style="left:1642.00px;top:91.10px;width:43.00px;height:21.00px;border-radius:3px;background:#f5474e;color:#fff;font-size:13px;line-height:19px;text-align:center;letter-spacing:3px;padding-left:3px">红冲</div>
<div class="a" style="left:1491.00px;top:116.10px;width:268.00px;height:27.70px;background:#fafafa"></div>
<div class="a" style="left:1612.00px;top:121.10px;width:28.00px;height:16.00px;font-size:13px;line-height:16px;color:#f27424">查看</div>
<div class="a" style="left:1491.00px;top:144.80px;width:268.00px;height:27.70px;background:#fff"></div>
<div class="a" style="left:1612.00px;top:149.80px;width:28.00px;height:16.00px;font-size:13px;line-height:16px;color:#f27424">查看</div>
<div class="a" style="left:1491.00px;top:173.50px;width:268.00px;height:27.70px;background:#fafafa"></div>
<div class="a" style="left:1570.00px;top:178.50px;width:28.00px;height:16.00px;font-size:13px;line-height:16px;color:#f27424">查看</div>
<div class="a" style="left:1610.00px;top:178.50px;width:28.00px;height:16.00px;font-size:13px;line-height:16px;color:#f27424">复制</div>
<div class="a" style="left:1642.00px;top:177.20px;width:43.00px;height:21.00px;border-radius:3px;background:#f5474e;color:#fff;font-size:13px;line-height:19px;text-align:center;letter-spacing:3px;padding-left:3px">红冲</div>
<div class="a" style="left:1491.00px;top:202.20px;width:268.00px;height:27.70px;background:#fff"></div>
<div class="a" style="left:1612.00px;top:207.20px;width:28.00px;height:16.00px;font-size:13px;line-height:16px;color:#f27424">查看</div>
<div class="a" style="left:1491.00px;top:230.90px;width:268.00px;height:27.70px;background:#fafafa"></div>
<div class="a" style="left:1570.00px;top:235.90px;width:28.00px;height:16.00px;font-size:13px;line-height:16px;color:#f27424">查看</div>
<div class="a" style="left:1610.00px;top:235.90px;width:28.00px;height:16.00px;font-size:13px;line-height:16px;color:#f27424">复制</div>
<div class="a" style="left:1642.00px;top:234.60px;width:43.00px;height:21.00px;border-radius:3px;background:#f5474e;color:#fff;font-size:13px;line-height:19px;text-align:center;letter-spacing:3px;padding-left:3px">红冲</div>
<div class="a" style="left:1491.00px;top:259.60px;width:268.00px;height:27.70px;background:#fff"></div>
<div class="a" style="left:1612.00px;top:264.60px;width:28.00px;height:16.00px;font-size:13px;line-height:16px;color:#f27424">查看</div>
<div class="a" style="left:1491.00px;top:288.30px;width:268.00px;height:27.70px;background:#fafafa"></div>
<div class="a" style="left:1570.00px;top:293.30px;width:28.00px;height:16.00px;font-size:13px;line-height:16px;color:#f27424">查看</div>
<div class="a" style="left:1610.00px;top:293.30px;width:28.00px;height:16.00px;font-size:13px;line-height:16px;color:#f27424">复制</div>
<div class="a" style="left:1642.00px;top:292.00px;width:43.00px;height:21.00px;border-radius:3px;background:#f5474e;color:#fff;font-size:13px;line-height:19px;text-align:center;letter-spacing:3px;padding-left:3px">红冲</div>
<div class="a" style="left:0.00px;top:448.00px;width:1490.00px;height:2.00px;background:#efefef"></div>
<div class="a" style="left:17.00px;top:448.00px;width:1006.00px;height:2.00px;background:#c9c9c9"></div>
<div class="a" style="left:0.00px;top:450.00px;width:1759.00px;height:1.00px;background:#bcc1ca"></div>
<div class="a" style="left:62.00px;top:451.00px;width:1.00px;height:28.00px;background:#dde1ea"></div>
<div class="a" style="left:169.00px;top:451.00px;width:1.00px;height:28.00px;background:#dde1ea"></div>
<div class="a" style="left:303.00px;top:451.00px;width:1.00px;height:28.00px;background:#dde1ea"></div>
<div class="a" style="left:456.00px;top:451.00px;width:1.00px;height:28.00px;background:#dde1ea"></div>
<div class="a" style="left:662.00px;top:451.00px;width:1.00px;height:28.00px;background:#dde1ea"></div>
<div class="a" style="left:769.00px;top:451.00px;width:1.00px;height:28.00px;background:#dde1ea"></div>
<div class="a" style="left:903.00px;top:451.00px;width:1.00px;height:28.00px;background:#dde1ea"></div>
<div class="a" style="left:1038.00px;top:451.00px;width:1.00px;height:28.00px;background:#dde1ea"></div>
<div class="a" style="left:1172.00px;top:451.00px;width:1.00px;height:28.00px;background:#dde1ea"></div>
<div class="a" style="left:1262.00px;top:451.00px;width:1.00px;height:28.00px;background:#dde1ea"></div>
<div class="a" style="left:1351.00px;top:451.00px;width:1.00px;height:28.00px;background:#dde1ea"></div>
<div class="a" style="left:1490.00px;top:451.00px;width:1.00px;height:44.00px;background:#bcc1ca"></div>
<div class="a" style="left:0.00px;top:451.00px;width:62.00px;height:28.00px;line-height:28px;font-size:12px;padding-left:20px">合计</div>
<div class="td" style="left:1173.00px;top:451.00px;width:89.00px;height:28.00px;line-height:28px">24923.47</div>
<div class="td" style="left:1263.00px;top:451.00px;width:88.00px;height:28.00px;line-height:28px">24880.71</div>
<div class="a" style="left:0.00px;top:479.00px;width:1490.00px;height:16.00px;background:#f0f0f0"></div>
<div class="a" style="left:17.00px;top:479.00px;width:1006.00px;height:16.00px;background:#cdcdcd"></div>
<div class="a" style="left:1491.00px;top:479.00px;width:268.00px;height:16.00px;background:#f0f0f0"></div>
<svg class="a" style="left:3px;top:482px" width="10" height="10" viewBox="0 0 10 10"><path d="M6.5 1.5L3 5l3.5 3.5" fill="none" stroke="#555" stroke-width="1.8"/></svg>
<svg class="a" style="left:1477px;top:482px" width="10" height="10" viewBox="0 0 10 10"><path d="M3.5 1.5L7 5 3.5 8.5" fill="none" stroke="#555" stroke-width="1.8"/></svg>
<svg class="a" style="left:1494px;top:482px" width="10" height="10" viewBox="0 0 10 10"><path d="M6.5 1.5L3 5l3.5 3.5" fill="none" stroke="#555" stroke-width="1.8"/></svg>
<svg class="a" style="left:1746px;top:482px" width="10" height="10" viewBox="0 0 10 10"><path d="M3.5 1.5L7 5 3.5 8.5" fill="none" stroke="#555" stroke-width="1.8"/></svg>
</div>
<div class="pg" style="left:1482px"><svg width="10" height="12" viewBox="0 0 10 12" style="margin-top:8px;vertical-align:top"><path d="M7 1.5L2.5 6 7 10.5" fill="none" stroke="#bbb" stroke-width="1.1"/></svg></div>
<div class="pg" style="left:1518px;border-color:#f27424;color:#f27424">1</div>
<div class="pg" style="left:1554px">2</div>
<div class="pg" style="left:1590px">3</div>
<div class="pg" style="left:1626px">4</div>
<div class="pg" style="left:1662px">5</div>
<div class="pg" style="left:1697px">6</div>
<div class="pg" style="left:1733px">7</div>
<div class="pg" style="left:1769px"><svg width="10" height="12" viewBox="0 0 10 12" style="margin-top:8px;vertical-align:top"><path d="M3 1.5L7.5 6 3 10.5" fill="none" stroke="#444" stroke-width="1.1"/></svg></div>
<div class="pg" style="left:1812px;width:79px;text-align:left;padding-left:10px;color:#555">10 条/页<svg width="10" height="7" viewBox="0 0 10 7" style="position:absolute;left:58px;top:11px"><path d="M.5 .5l4.5 5 4.5-5" fill="none" stroke="#bbb" stroke-width="1"/></svg></div>
</body></html>
